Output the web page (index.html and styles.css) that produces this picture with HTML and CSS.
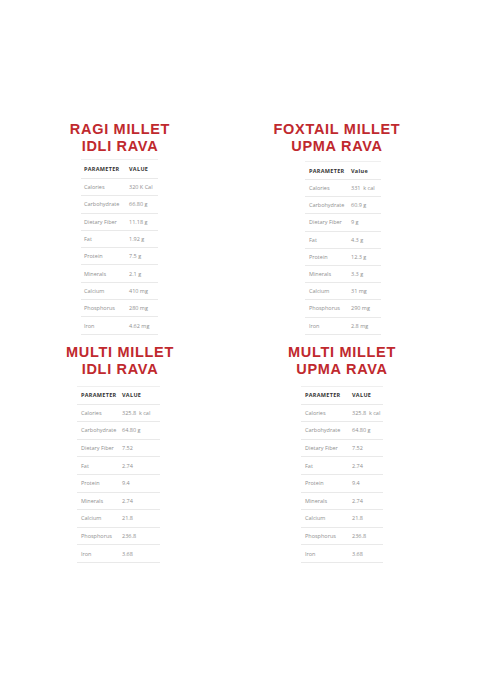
FILE: index.html
```html
<!DOCTYPE html>
<html>
<head>
<meta charset="utf-8">
<link rel="stylesheet" href="styles.css">
</head>
<body>
<div class="sheet">
  <section class="block b1">
    <h2 class="title"><span>RAGI MILLET</span><span>IDLI RAVA</span></h2>
    <div class="tbl">
      <div class="row head"><span>PARAMETER</span><span>VALUE</span></div>
      <div class="row"><span>Calories</span><span>320 K Cal</span></div>
      <div class="row"><span>Carbohydrate</span><span>66.80 g</span></div>
      <div class="row"><span>Dietary Fiber</span><span>11.18 g</span></div>
      <div class="row"><span>Fat</span><span>1.92 g</span></div>
      <div class="row"><span>Protein</span><span>7.5 g</span></div>
      <div class="row"><span>Minerals</span><span>2.1 g</span></div>
      <div class="row"><span>Calcium</span><span>410 mg</span></div>
      <div class="row"><span>Phosphorus</span><span>280 mg</span></div>
      <div class="row"><span>Iron</span><span>4.62 mg</span></div>
    </div>
  </section>
  <section class="block b2">
    <h2 class="title"><span>FOXTAIL MILLET</span><span>UPMA RAVA</span></h2>
    <div class="tbl">
      <div class="row head"><span>PARAMETER</span><span>Value</span></div>
      <div class="row"><span>Calories</span><span>331 &nbsp;k cal</span></div>
      <div class="row"><span>Carbohydrate</span><span>60.9 g</span></div>
      <div class="row"><span>Dietary Fiber</span><span>9 g</span></div>
      <div class="row"><span>Fat</span><span>4.3 g</span></div>
      <div class="row"><span>Protein</span><span>12.3 g</span></div>
      <div class="row"><span>Minerals</span><span>3.3 g</span></div>
      <div class="row"><span>Calcium</span><span>31 mg</span></div>
      <div class="row"><span>Phosphorus</span><span>290 mg</span></div>
      <div class="row"><span>Iron</span><span>2.8 mg</span></div>
    </div>
  </section>
  <section class="block b3">
    <h2 class="title"><span>MULTI MILLET</span><span>IDLI RAVA</span></h2>
    <div class="tbl">
      <div class="row head"><span>PARAMETER</span><span>VALUE</span></div>
      <div class="row"><span>Calories</span><span>325.8 &nbsp;k cal</span></div>
      <div class="row"><span>Carbohydrate</span><span>64.80 g</span></div>
      <div class="row"><span>Dietary Fiber</span><span>7.52</span></div>
      <div class="row"><span>Fat</span><span>2.74</span></div>
      <div class="row"><span>Protein</span><span>9.4</span></div>
      <div class="row"><span>Minerals</span><span>2.74</span></div>
      <div class="row"><span>Calcium</span><span>21.8</span></div>
      <div class="row"><span>Phosphorus</span><span>236.8</span></div>
      <div class="row"><span>Iron</span><span>3.68</span></div>
    </div>
  </section>
  <section class="block b4">
    <h2 class="title"><span>MULTI MILLET</span><span>UPMA RAVA</span></h2>
    <div class="tbl">
      <div class="row head"><span>PARAMETER</span><span>VALUE</span></div>
      <div class="row"><span>Calories</span><span>325.8 &nbsp;k cal</span></div>
      <div class="row"><span>Carbohydrate</span><span>64.80 g</span></div>
      <div class="row"><span>Dietary Fiber</span><span>7.52</span></div>
      <div class="row"><span>Fat</span><span>2.74</span></div>
      <div class="row"><span>Protein</span><span>9.4</span></div>
      <div class="row"><span>Minerals</span><span>2.74</span></div>
      <div class="row"><span>Calcium</span><span>21.8</span></div>
      <div class="row"><span>Phosphorus</span><span>236.8</span></div>
      <div class="row"><span>Iron</span><span>3.68</span></div>
    </div>
  </section>
</div>
</body>
</html>
```
FILE: styles.css
```css
html, body {
  margin: 0;
  padding: 0;
  background: #ffffff;
}
body {
  width: 477px;
  height: 681px;
  overflow: hidden;
  font-family: "Open Sans", "Noto Sans", sans-serif;
}
.sheet {
  padding-top: 121px;
  display: grid;
  grid-template-columns: 240px 194px;
  grid-template-rows: 223px auto;
}
.block {
  display: flex;
  flex-direction: column;
}
.title {
  margin: 0;
  display: flex;
  flex-direction: column;
  align-items: center;
  color: #c0292e;
  font-family: "Liberation Sans", Arial, sans-serif;
  font-weight: 700;
  font-size: 14.5px;
  line-height: 17px;
  letter-spacing: 0.7px;
}
.title span {
  display: block;
  height: 17px;
  white-space: nowrap;
}
.tbl {
  display: flex;
  flex-direction: column;
  border-top: 1px solid #efefef;
}
.row {
  display: grid;
  align-items: center;
  border-bottom: 1px solid #e9e9e9;
  font-size: 5.5px;
  color: #8f8f8f;
  box-sizing: border-box;
}
.row span {
  padding-left: 4px;
  white-space: nowrap;
}
.row.head {
  color: #333333;
  font-weight: 700;
  letter-spacing: 0.3px;
}
.b1 .tbl { margin: 4px 0 0 81px; width: 77px; }
.b1 .row { grid-template-columns: 45px 1fr; height: 17.3px; }
.b1 .row span { padding-left: 3px; }
.b1 .row.head { height: 19px; }

.b2 .tbl { margin: 6px 0 0 65px; width: 76px; }
.b2 .row { grid-template-columns: 42px 1fr; height: 17.2px; }
.b2 .row.head { height: 18px; }

.b3 .tbl { margin: 8px 0 0 77px; width: 83px; }
.b3 .row { grid-template-columns: 41px 1fr; height: 17.6px; }

.b4 { padding-left: 10px; }
.b4 .tbl { margin: 8px 0 0 51px; width: 82px; }
.b4 .row { grid-template-columns: 47px 1fr; height: 17.6px; }
```
